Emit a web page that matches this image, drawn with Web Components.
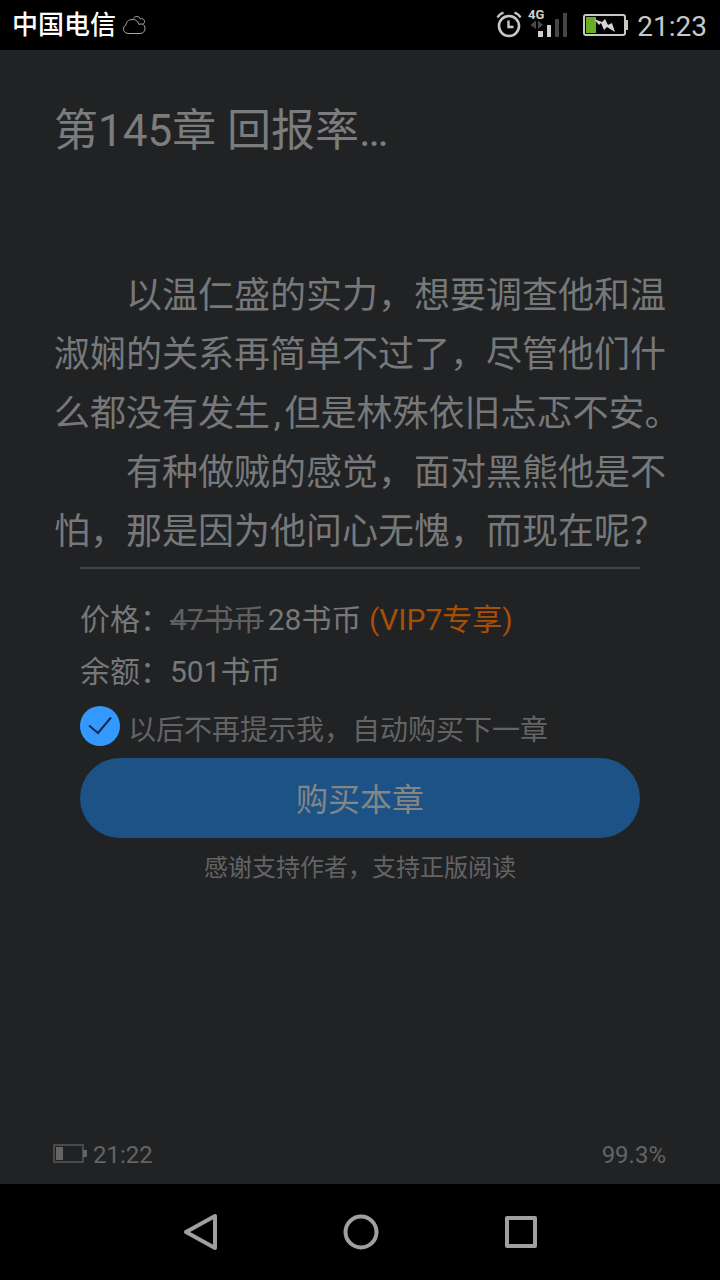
<!DOCTYPE html>
<html lang="zh-CN">
<head>
<meta charset="utf-8">
<meta name="viewport" content="width=device-width, initial-scale=1">
<title>第145章 回报率</title>
<style>
  html, body { margin: 0; background: #212224; }
  body { font-family: Roboto, "Noto Sans CJK SC", sans-serif; }
</style>
</head>
<body>
<reader-app>
  <status-bar slot="top" carrier="中国电信" time="21:23"></status-bar>
  <chapter-page heading="第145章 回报率…">
    <p>以温仁盛的实力，想要调查他和温淑娴的关系再简单不过了，尽管他们什么都没有发生&hairsp;,&hairsp;但是林殊依旧忐忑不安。</p>
    <p>有种做贼的感觉，面对黑熊他是不怕，那是因为他问心无愧，而现在呢？</p>
  </chapter-page>
  <purchase-panel>
    <span slot="old">47书币</span>
    <span slot="price">28书币</span>
    <span slot="vip">(VIP7专享)</span>
    <span slot="balance">501书币</span>
  </purchase-panel>
  <reader-footer slot="bottom" time="21:22" progress="99.3%"></reader-footer>
  <nav-bar slot="bottom"></nav-bar>
</reader-app>

<script>
class BaseElement extends HTMLElement {
  constructor() {
    super();
    this.attachShadow({ mode: "open" }).innerHTML = this.template();
  }
  template() { return ""; }
}

customElements.define("reader-app", class extends BaseElement {
  template() {
    return `<style>
      :host { display: flex; flex-direction: column; min-height: 100vh; background: #212224; }
      main { flex: 1; }
    </style>
    <slot name="top"></slot>
    <main><slot></slot></main>
    <slot name="bottom"></slot>`;
  }
});

customElements.define("status-bar", class extends BaseElement {
  template() {
    return `<style>
      :host { display: block; background: #000; color: #fff; }
      header { display: flex; align-items: center; height: 50px; padding: 0 13px 0 12px; }
      .carrier { font-size: 26px; line-height: 50px; font-weight: 500; }
      .cloud { margin-left: 6px; }
      .icons { display: flex; align-items: center; margin-left: auto; }
      time { font-size: 28px; line-height: 46px; padding-top: 4px; color: #c8c8c8; margin-left: 9px; }
      svg { display: block; }
      text { font: 700 13px Roboto, sans-serif; }
    </style>
    <header>
      <span class="carrier">${this.getAttribute("carrier")}</span>
      <svg class="cloud" width="26" height="50" viewBox="122 0 26 50" fill="none" stroke="#a8a8a8" stroke-width="1">
        <path d="M129 33.500h11c3 0 5-2 5-5 0-2-1-4-3-4.500-1 0-2 0-3 .5-1-4-4-5-7-5-4 0-6 3-6 5.500-2 1-2.500 2.500-2.500 4.500 0 2.500 2.500 4 5.500 4z"/>
        <path d="M133.500 18.500c1-2.500 5.500-3 7 .5 2.500-1 4.500 1 4 3 0 1-1 2-2 2"/>
      </svg>
      <div class="icons">
        <svg width="132" height="50" viewBox="496 0 132 50" fill="none">
          <g stroke="#c8c8c8">
            <circle cx="509" cy="26" r="10" stroke-width="2.600"/>
            <path d="M508.500 20.500v6.500h5" stroke-width="2.400"/>
            <path d="M497.500 17.500c1-2 3.500-4 6-5M520.500 17.500c-1-2-3.500-4-6-5" stroke-width="2.200"/>
          </g>
          <text x="528" y="19" fill="#d0d0d0">4G</text>
          <path d="M536 20.500v8.500l-5.500-4zM538 20.500v8.500l5-4z" fill="#4a4a4a"/>
          <path d="M538 31h5v6h-5zM547 25h4v12h-4z" fill="#cfcfcf"/>
          <path d="M555 19h4v18h-4zM563 13h4v24h-4z" fill="#454545"/>
          <rect x="584" y="15" width="41" height="20" rx="2" stroke="#c8c8c8" stroke-width="2"/>
          <path d="M625 20h3v10h-3z" fill="#c8c8c8"/>
          <path d="M586 17h10v16h-10z" fill="#69ad22"/>
          <path d="M594 19l8 3 3-3 3 6 4-2 3 9-8-5-3 3-3-7-2 2z" fill="#d4d4d4"/>
        </svg>
        <time>${this.getAttribute("time")}</time>
      </div>
    </header>`;
  }
});

customElements.define("chapter-page", class extends BaseElement {
  template() {
    return `<style>
      :host { display: block; padding: 51px 32px 0 54px; }
      h1 { margin: 0 0 106px; font-size: 44px; line-height: 60px; font-weight: 400; color: #7c7c7c; }
      ::slotted(p) { margin: 0; font-size: 36px; line-height: 59px; text-indent: 2em; color: #76787a; }
    </style>
    <h1>${this.getAttribute("heading")}</h1>
    <article><slot></slot></article>`;
  }
});

customElements.define("check-option", class extends BaseElement {
  template() {
    return `<style>
      :host { display: block; }
      label { display: flex; align-items: center; gap: 8px; font-size: 28px; line-height: 30px; color: #646464; }
      .box { display: grid; flex: none; }
      .text { padding-top: 10px; }
      input, svg { grid-area: 1 / 1; width: 40px; height: 40px; margin: 0; }
      input { appearance: none; border-radius: 50%; background: #555; }
      input:checked { background: #3399ff; }
      svg { pointer-events: none; }
      input:not(:checked) + svg { visibility: hidden; }
    </style>
    <label for="auto">
      <span class="box">
        <input type="checkbox" id="auto" checked>
        <svg viewBox="0 0 40 40" fill="none" stroke="#162b41" stroke-width="2"><path d="M9 19.500l9 7.500 13-15.500"/></svg>
      </span>
      <span class="text"><slot></slot></span>
    </label>`;
  }
});

customElements.define("purchase-panel", class extends BaseElement {
  template() {
    return `<style>
      :host { display: block; margin: 5px 80px 0; border-top: 2px solid #424345; color: #76787a; }
      dl { margin: 0; padding: 25px 0 8px; font-size: 30px; line-height: 52px; }
      dl div { display: flex; }
      dt, dd { margin: 0; }
      dd { white-space: pre; }
      s { color: #606060; margin-right: 4px; text-decoration-thickness: 2px; }
      .vip { color: #a64f05; }
      button { display: block; width: 100%; height: 80px; margin: 12px 0 0; padding: 0 0 2px; border: 0; border-radius: 40px;
        background: #1c5285; color: #858585; font: inherit; font-size: 32px; }
      .hint { margin: 12px 0 0; font-size: 24px; line-height: 36px; text-align: center; color: #646464; }
    </style>
    <dl>
      <div><dt>价格：</dt><dd><s><slot name="old"></slot></s><slot name="price"></slot> <span class="vip"><slot name="vip"></slot></span></dd></div>
      <div><dt>余额：</dt><dd><slot name="balance"></slot></dd></div>
    </dl>
    <check-option>以后不再提示我，自动购买下一章</check-option>
    <button type="button">购买本章</button>
    <p class="hint">感谢支持作者，支持正版阅读</p>`;
  }
});

customElements.define("reader-footer", class extends BaseElement {
  template() {
    return `<style>
      :host { display: block; padding: 0 54px 14px 53px; font-size: 24px; line-height: 30px; color: #646464; }
      footer, .left { display: flex; align-items: center; }
      footer { justify-content: space-between; }
      .left { gap: 6px; }
      time, .progress { padding-top: 2px; }
    </style>
    <footer>
      <span class="left">
        <svg width="34" height="20" viewBox="0 0 34 20" fill="none">
          <rect x="1" y="1" width="29" height="17" stroke="#4a4a4b" stroke-width="2"/>
          <path d="M3 3h7v13h-7zM30 6h4v7h-4z" fill="#646464"/>
        </svg>
        <time>${this.getAttribute("time")}</time>
      </span>
      <span class="progress">${this.getAttribute("progress")}</span>
    </footer>`;
  }
});

customElements.define("nav-bar", class extends BaseElement {
  template() {
    return `<style>
      :host { display: block; background: #000; }
      nav { display: flex; justify-content: center; height: 96px; }
      button { flex: 0 0 160px; display: grid; place-items: center; padding: 0; border: 0; background: none; }
      svg { width: 40px; height: 40px; fill: none; stroke: #a0a0a0; stroke-width: 4; stroke-linejoin: round; }
    </style>
    <nav>
      <button type="button" aria-label="返回"><svg viewBox="0 0 40 40"><path d="M35 4v32L6 20z"/></svg></button>
      <button type="button" aria-label="主页"><svg viewBox="0 0 40 40"><circle cx="21" cy="20" r="15.500"/></svg></button>
      <button type="button" aria-label="最近任务"><svg viewBox="0 0 40 40"><rect x="7" y="6" width="28" height="28"/></svg></button>
    </nav>`;
  }
});
</script>
</body>
</html>
